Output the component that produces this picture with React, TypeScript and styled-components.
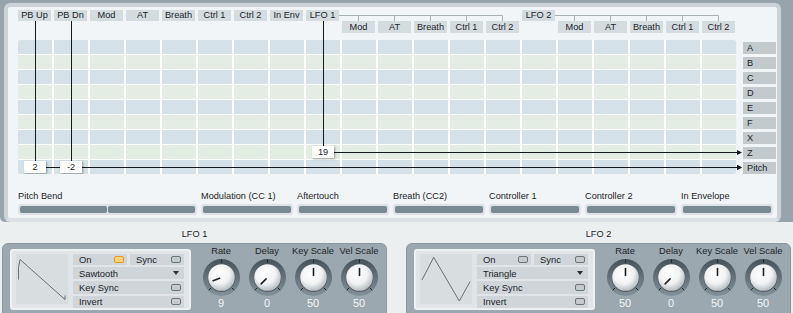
import * as React from 'react'
import styled, { createGlobalStyle } from 'styled-components'

const GlobalStyle = createGlobalStyle`
  html, body {
    margin: 0;
    padding: 0;
    background: #eceff0;
  }
  body {
    font-family: 'Liberation Sans', Arial, sans-serif;
    color: #1c2428;
  }
`

const COL = 36

const sources = ['PB Up', 'PB Dn', 'Mod', 'AT', 'Breath', 'Ctrl 1', 'Ctrl 2', 'In Env', 'LFO 1']
const lfoTargets = ['Mod', 'AT', 'Breath', 'Ctrl 1', 'Ctrl 2']
const dests = ['A', 'B', 'C', 'D', 'E', 'F', 'X', 'Z', 'Pitch']
const amounts: Record<string, string> = { '8-0': '2', '8-1': '-2', '7-8': '19' }
const controllers = ['Modulation (CC 1)', 'Aftertouch', 'Breath (CC2)', 'Controller 1', 'Controller 2', 'In Envelope']

const tabs = [
  ...sources.map((label, i) => ({ label, col: i, row: 1 })),
  ...lfoTargets.map((label, i) => ({ label, col: 9 + i, row: 2 })),
  { label: 'LFO 2', col: 14, row: 1 },
  ...lfoTargets.map((label, i) => ({ label, col: 15 + i, row: 2 })),
]

const Page = styled.div`
  width: 793px;
  height: 313px;
  overflow: hidden;
`

const Frame = styled.div`
  background: #97a4ab;
  padding: 3px 12px 0 4px;
  border-radius: 0 0 0 5px;
`

const MatrixPanel = styled.div`
  background: #f2f5f7;
  border: 4px solid #cbd3d7;
  border-bottom-color: #dae0e3;
  border-radius: 6px;
  padding: 3px 0 3px 10px;
`

const Matrix = styled.div`
  position: relative;
  width: 758px;
`

const HeaderGrid = styled.div`
  display: grid;
  grid-template-columns: repeat(20, 34px);
  grid-template-rows: 11px 12px;
  column-gap: 2px;
  margin-bottom: 7px;
`

const Tab = styled.div<{ $col: number; $row: number }>`
  grid-column: ${(p) => p.$col + 1};
  grid-row: ${(p) => p.$row};
  width: 33px;
  background: #d5dce0;
  font-size: 9.2px;
  line-height: ${(p) => (p.$row === 1 ? 11 : 12)}px;
  text-align: center;
  white-space: nowrap;
`

const Body = styled.div`
  display: flex;
  align-items: flex-start;
`

const Grid = styled.div`
  display: grid;
  grid-template-columns: repeat(20, 34px);
  grid-template-rows: repeat(9, 14px);
  gap: 1px 2px;
  background: #ffffff;
  border-radius: 2px;
  overflow: hidden;
`

const Cell = styled.div<{ $alt: boolean }>`
  background: ${(p) => (p.$alt ? '#e3ede4' : '#d4e1e9')};
  display: flex;
  align-items: center;
  justify-content: center;
`

const Amount = styled.div`
  position: relative;
  z-index: 2;
  width: 22px;
  height: 12px;
  background: #ffffff;
  box-shadow: 1px 1px 2px rgba(0, 0, 0, 0.35);
  font-size: 9.2px;
  line-height: 12px;
  text-align: center;
`

const DestList = styled.div`
  display: grid;
  grid-template-rows: repeat(9, 14px);
  row-gap: 1px;
  margin-left: 7px;
`

const Dest = styled.div`
  align-self: end;
  width: 29px;
  height: 12px;
  padding-left: 4px;
  background: #c3cacd;
  font-size: 9.2px;
  line-height: 12px;
`

const Wires = styled.svg`
  position: absolute;
  left: 0;
  top: 0;
  z-index: 1;
  overflow: visible;
  pointer-events: none;
`

const Controllers = styled.div`
  display: flex;
  gap: 4px;
  margin-top: 17px;
`

const Controller = styled.div<{ $w: number }>`
  width: ${(p) => p.$w}px;
`

const ControllerName = styled.div`
  font-size: 9.2px;
  line-height: 11px;
  margin-bottom: 2px;
  white-space: nowrap;
`

const Bar = styled.div`
  display: flex;
  gap: 1px;
  height: 7px;
  padding: 2px;
  background: #dce2e5;
  border-radius: 3px;
`

const BarFill = styled.div`
  flex: 1;
  background: #798a93;
  border-radius: 2px;
`

const LfoArea = styled.div`
  display: flex;
  gap: 19px;
  padding: 7px 0 0 2px;
`

const LfoUnit = styled.div`
  width: 385px;
  display: flex;
  flex-direction: column;
  align-items: center;
`

const LfoTitle = styled.div`
  font-size: 9.2px;
  line-height: 11px;
  margin-bottom: 3px;
`

const LfoPanel = styled.div`
  box-sizing: border-box;
  width: 385px;
  height: 74px;
  display: flex;
  align-items: flex-start;
  padding: 1px 0 0 7px;
  background: #9ba8af;
  border: 1px solid #8a979e;
  border-radius: 6px 6px 0 0;
`

const LfoBody = styled.div`
  box-sizing: border-box;
  width: 181px;
  height: 61px;
  margin-top: 4px;
  display: flex;
  gap: 5px;
  padding: 3px 5px 0 4px;
  background: #e1e5e7;
  border: 2px solid #eef1f2;
  border-radius: 3px;
`

const Wave = styled.svg`
  display: block;
  background: #d8dde0;
`

const Options = styled.div`
  display: flex;
  flex-direction: column;
  gap: 2px;
  width: 111px;
`

const OptionRow = styled.div`
  display: flex;
  gap: 3px;
`

const Option = styled.div`
  flex: 1;
  height: 11px;
  display: flex;
  align-items: center;
  justify-content: space-between;
  padding: 0 3px 0 6px;
  background: #cfd5d8;
  font-size: 9.4px;
`

const Toggle = styled.div<{ $on?: boolean }>`
  box-sizing: border-box;
  width: 10px;
  height: 7px;
  border-radius: 2px;
  border: 1px solid ${(p) => (p.$on ? '#e39a16' : '#69747a')};
  background: ${(p) => (p.$on ? '#fdd37f' : '#c4cbcf')};
`

const DropArrow = styled.div`
  width: 0;
  height: 0;
  margin-right: 2px;
  border-left: 3px solid transparent;
  border-right: 3px solid transparent;
  border-top: 4px solid #2a3236;
`

const Knobs = styled.div`
  display: flex;
  margin-left: 7px;
`

const KnobCol = styled.div`
  width: 46px;
  display: flex;
  flex-direction: column;
  align-items: center;
`

const KnobName = styled.div`
  font-size: 9.3px;
  line-height: 12px;
  white-space: nowrap;
`

const KnobFace = styled.svg`
  display: block;
  margin: 2px 0 1px;
`

const KnobValue = styled.div`
  font-size: 11px;
  line-height: 12px;
  color: #f3f6f7;
`

const Knob = ({ value }: { value: number }) => {
  const id = React.useId().replace(/:/g, '')
  const c = 18.5
  const pt = (deg: number, r: number) => {
    const a = (deg * Math.PI) / 180
    return [c + Math.sin(a) * r, c - Math.cos(a) * r]
  }
  const angle = -135 + value * 2.7
  const [x1, y1] = pt(angle, 2)
  const [x2, y2] = pt(angle, 9)
  return (
    <KnobFace width={37} height={37} viewBox="0 0 37 37">
      <defs>
        <linearGradient id={`r${id}`} x1="0" y1="0" x2="0" y2="1">
          <stop offset="0" stopColor="#46525a" />
          <stop offset="1" stopColor="#83919a" />
        </linearGradient>
        <radialGradient id={`k${id}`} cx="0.42" cy="0.36" r="0.7">
          <stop offset="0" stopColor="#ffffff" />
          <stop offset="0.55" stopColor="#f0f2f3" />
          <stop offset="1" stopColor="#aab2b6" />
        </radialGradient>
      </defs>
      <circle cx={c} cy={c} r={18.5} fill={`url(#r${id})`} />
      {[-135, 0, 135].map((d) => {
        const [a1, b1] = pt(d, 14.8)
        const [a2, b2] = pt(d, 18)
        return <line key={d} x1={a1} y1={b1} x2={a2} y2={b2} stroke="#1e262a" strokeWidth={1} />
      })}
      <circle cx={c} cy={c + 1} r={13.6} fill="rgba(0,0,0,0.3)" />
      <circle cx={c} cy={c} r={13.3} fill={`url(#k${id})`} />
      <line x1={x1} y1={y1} x2={x2} y2={y2} stroke="#1b2225" strokeWidth={1.6} strokeLinecap="round" />
    </KnobFace>
  )
}

type LfoProps = {
  title: string
  shape: string
  wave: string
  on: boolean
  knobs: [string, number, string][]
}

const Lfo = ({ title, shape, wave, on, knobs }: LfoProps) => (
  <LfoUnit>
    <LfoTitle>{title}</LfoTitle>
    <LfoPanel>
      <LfoBody>
        <Wave width={52} height={50} viewBox="0 0 52 50">
          <path d={wave} fill="none" stroke="#5b6469" strokeWidth={0.9} />
        </Wave>
        <Options>
          <OptionRow>
            <Option>
              On
              <Toggle $on={on} />
            </Option>
            <Option>
              Sync
              <Toggle />
            </Option>
          </OptionRow>
          <Option>
            {shape}
            <DropArrow />
          </Option>
          <Option>
            Key Sync
            <Toggle />
          </Option>
          <Option>
            Invert
            <Toggle />
          </Option>
        </Options>
      </LfoBody>
      <Knobs>
        {knobs.map(([name, v, shown]) => (
          <KnobCol key={name}>
            <KnobName>{name}</KnobName>
            <Knob value={v} />
            <KnobValue>{shown}</KnobValue>
          </KnobCol>
        ))}
      </Knobs>
    </LfoPanel>
  </LfoUnit>
)

const colMid = (c: number) => c * COL + 17.5
const rowMid = (r: number) => 30 + r * 15 + 7.5
const ARROW_X = 724

const Routing = () => {
  const bracket = (tabCol: number, first: number) => {
    const ticks = [0, 1, 2, 3, 4].map((k) => (first + k) * COL + 16.5)
    return (
      <g stroke="#a6b0b5" strokeWidth={1}>
        <line x1={tabCol * COL + 33} y1={5.5} x2={ticks[4]} y2={5.5} />
        {ticks.map((x) => (
          <line key={x} x1={x} y1={5.5} x2={x} y2={11} />
        ))}
      </g>
    )
  }
  const route = (col: number, row: number) => (
    <g>
      <line x1={colMid(col)} y1={11} x2={colMid(col)} y2={rowMid(row)} stroke="#141a1d" />
      <line x1={colMid(col)} y1={rowMid(row)} x2={ARROW_X - 4} y2={rowMid(row)} stroke="#141a1d" />
      <polygon
        points={`${ARROW_X - 5},${rowMid(row) - 2.5} ${ARROW_X},${rowMid(row)} ${ARROW_X - 5},${rowMid(row) + 2.5}`}
        fill="#141a1d"
      />
    </g>
  )
  return (
    <Wires width={758} height={164}>
      {bracket(8, 9)}
      {bracket(14, 15)}
      {route(1, 8)}
      {route(0, 8)}
      {route(8, 7)}
    </Wires>
  )
}

const App = () => {
  return (
    <Page>
      <GlobalStyle />
      <Frame>
        <MatrixPanel>
          <Matrix>
            <HeaderGrid>
              {tabs.map((t) => (
                <Tab key={`${t.col}`} $col={t.col} $row={t.row}>
                  {t.label}
                </Tab>
              ))}
            </HeaderGrid>
            <Body>
              <Grid>
                {dests.map((d, r) =>
                  Array.from({ length: 20 }, (_, c) => (
                    <Cell key={`${d}-${c}`} $alt={r % 2 === 1}>
                      {amounts[`${r}-${c}`] && <Amount>{amounts[`${r}-${c}`]}</Amount>}
                    </Cell>
                  ))
                )}
              </Grid>
              <DestList>
                {dests.map((d) => (
                  <Dest key={d}>{d}</Dest>
                ))}
              </DestList>
            </Body>
            <Routing />
          </Matrix>
          <Controllers>
            <Controller $w={179}>
              <ControllerName>Pitch Bend</ControllerName>
              <Bar>
                <BarFill />
                <BarFill />
              </Bar>
            </Controller>
            {controllers.map((name) => (
              <Controller key={name} $w={92}>
                <ControllerName>{name}</ControllerName>
                <Bar>
                  <BarFill />
                </Bar>
              </Controller>
            ))}
          </Controllers>
        </MatrixPanel>
      </Frame>
      <LfoArea>
        <Lfo
          title="LFO 1"
          shape="Sawtooth"
          on
          wave="M2.5 25.5 V13.5 L4 5.5 L49 45.5 V41.5"
          knobs={[
            ['Rate', 9, '9'],
            ['Delay', 0, '0'],
            ['Key Scale', 50, '50'],
            ['Vel Scale', 50, '50'],
          ]}
        />
        <Lfo
          title="LFO 2"
          shape="Triangle"
          on={false}
          wave="M2 26 L13.7 3.3 L39.3 47 L50 27.7"
          knobs={[
            ['Rate', 50, '50'],
            ['Delay', 0, '0'],
            ['Key Scale', 50, '50'],
            ['Vel Scale', 50, '50'],
          ]}
        />
      </LfoArea>
    </Page>
  )
}

export default App
